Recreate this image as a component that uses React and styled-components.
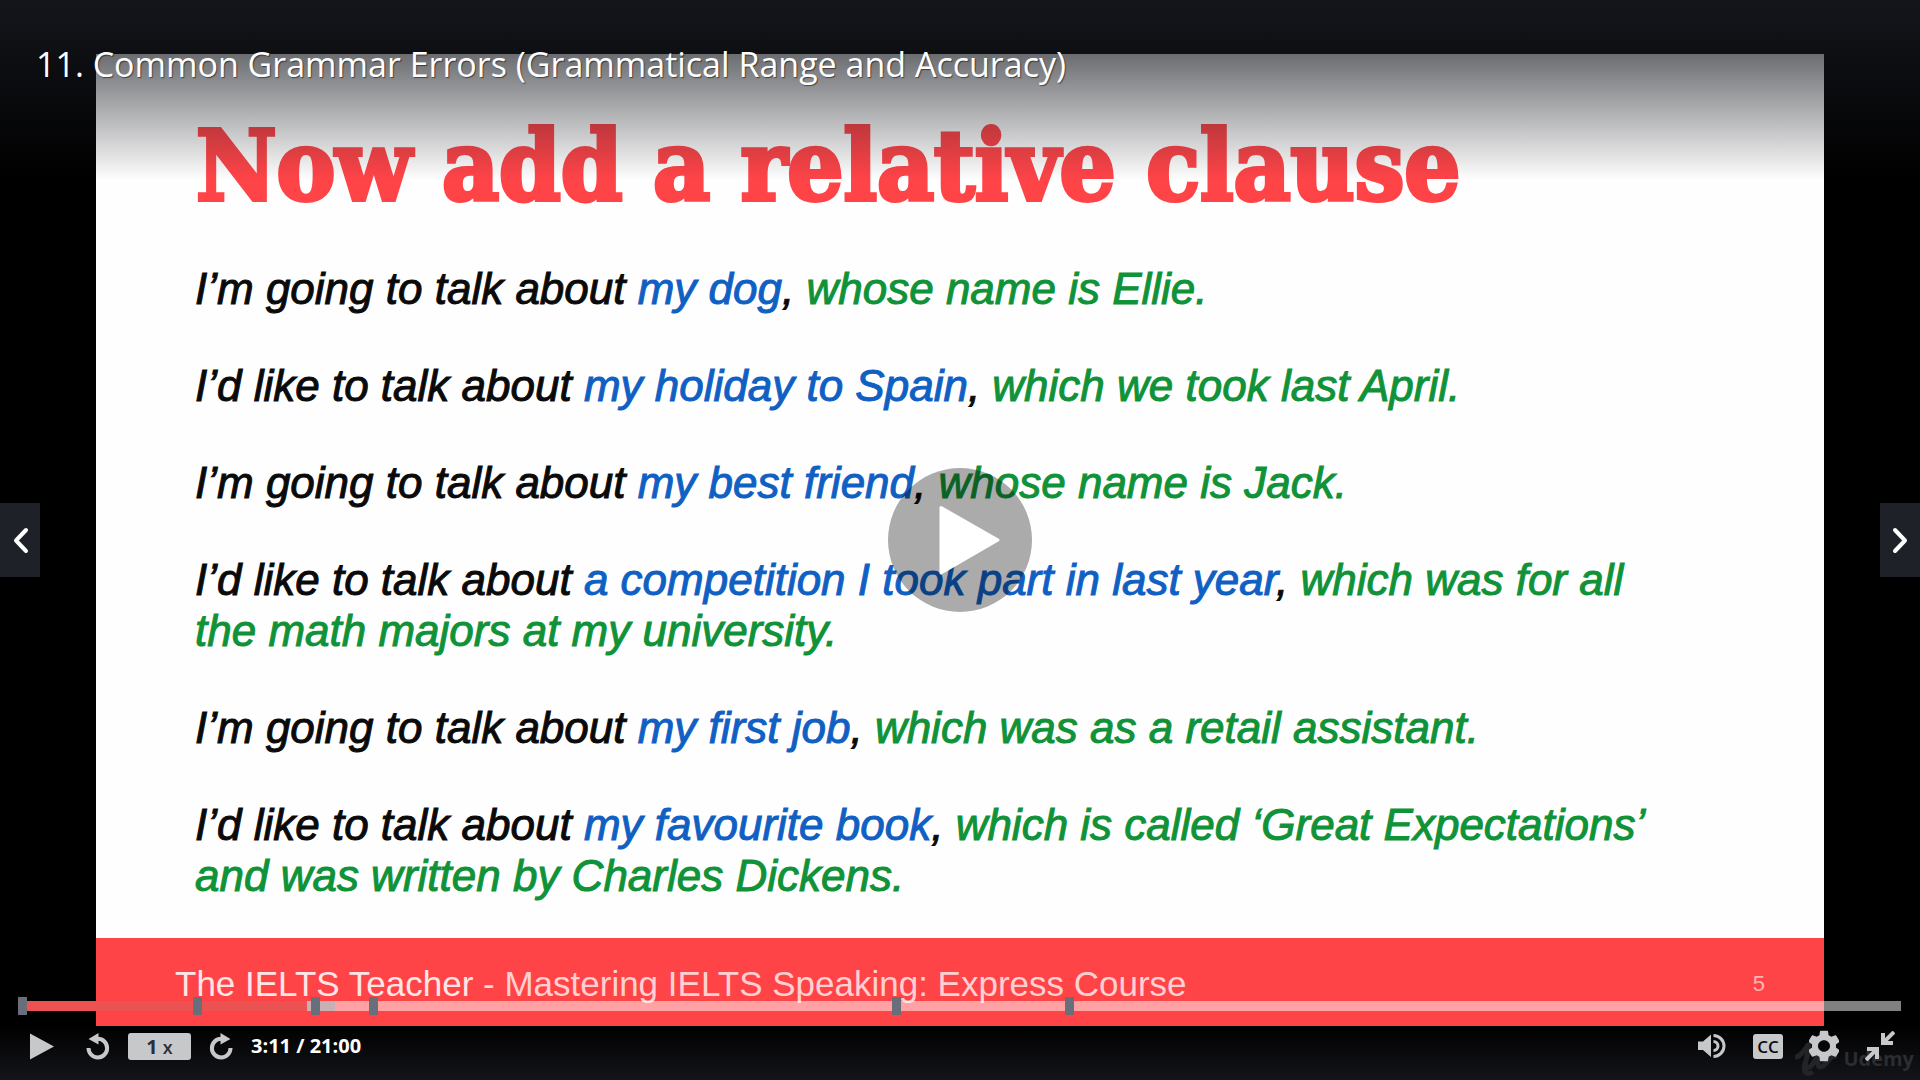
import React, { useState } from "react";
import styled, { createGlobalStyle } from "styled-components";

const GlobalStyle = createGlobalStyle`
  * { box-sizing: border-box; }
  body { margin: 0; background: #000; }
  button { font: inherit; border: 0; padding: 0; cursor: pointer; }
`;

const UI_FONT = '"Open Sans", "Noto Sans", sans-serif';
const SLIDE_FONT = '"Liberation Sans", Arial, sans-serif';

const Player = styled.main`
  position: relative;
  display: flex;
  align-items: center;
  justify-content: center;
  min-height: 100vh;
  overflow: hidden;
  background: #000;
  font-family: ${UI_FONT};
`;

const Slide = styled.article`
  display: flex;
  flex-direction: column;
  width: 90%;
  min-height: 90vh;
  background: #fefefe;
  font-family: ${SLIDE_FONT};
`;

const SlideTitle = styled.h1`
  margin: 0;
  padding: 62px 100px 0;
  color: #ff4448;
  font: bold 98px/100px "DejaVu Serif Condensed", "DejaVu Serif", serif;
  -webkit-text-stroke: 4px #ff4448;
`;

const Examples = styled.div`
  display: flex;
  flex: 1;
  flex-direction: column;
  gap: 46px;
  padding: 47px 150px 0 99px;
  color: #0a0a0a;
  font-size: 44px;
  line-height: 51px;
  font-style: italic;
`;

const Example = styled.p`
  margin: 0;
  -webkit-text-stroke: 1px;
`;

const Part = styled.span`
  color: ${(p) => (p.$kind === "topic" ? "#1060c4" : "#0f9238")};
`;

const SlideFooter = styled.footer`
  display: flex;
  align-items: center;
  justify-content: space-between;
  height: 88px;
  padding: 4px 59px 0 79px;
  background: #ff4448;
  color: #ffd0d1;
  font-size: 35px;
  line-height: 44px;
`;

const Brand = styled.span`
  color: #ffe6e6;
`;

const PageNumber = styled.span`
  color: #ffb4b6;
  font-size: 22px;
`;

const TopBar = styled.header`
  position: absolute;
  inset: 0 0 auto;
  height: 180px;
  padding: 40px 36px;
  background: linear-gradient(rgba(22, 24, 30, 0.9), rgba(22, 24, 30, 0));
`;

const LectureTitle = styled.h2`
  margin: 0;
  color: #fff;
  font-size: 34px;
  font-weight: 400;
  line-height: 48px;
  text-shadow: 1px 1px 1px rgba(0, 0, 0, 0.5);
`;

const BigPlay = styled.button`
  position: absolute;
  inset: 0;
  margin: auto;
  width: 144px;
  height: 144px;
  border-radius: 50%;
  background: rgba(0, 0, 0, 0.325);
`;

const NavButton = styled.button`
  position: absolute;
  top: calc(50% - 37px);
  ${(p) => p.$side}: 0;
  display: grid;
  place-items: center;
  width: 40px;
  height: 74px;
  background: #1e2228;
`;

const BottomBar = styled.div`
  position: absolute;
  inset: auto 0 0;
`;

const Timeline = styled.div`
  position: relative;
  display: flex;
  align-items: center;
  margin: 0 19px 0 22px;
  height: 18px;
`;

const Seek = styled.input`
  appearance: none;
  display: block;
  width: 100%;
  height: 10px;
  margin: 0;
  cursor: pointer;
  background: linear-gradient(
    to right,
    #ec5252 0 ${(p) => p.$played}%,
    rgba(190, 196, 200, 0.84) ${(p) => p.$played}% ${(p) => p.$buffered}%,
    rgba(255, 255, 255, 0.5) ${(p) => p.$buffered}%
  );
  &::-webkit-slider-thumb { appearance: none; width: 1px; height: 10px; }
`;

const Marker = styled.span`
  position: absolute;
  top: 0;
  width: 9px;
  height: 18px;
  margin-left: -4px;
  background: #686f7a;
`;

const Controls = styled.div`
  display: flex;
  align-items: center;
  justify-content: space-between;
  height: 65px;
  padding: 0 24px 3px 16px;
  background: linear-gradient(rgba(20, 21, 26, 0) 11px, #14151a);
  color: #c7c8ca;
`;

const Group = styled.div`
  position: relative;
  display: flex;
  align-items: center;
  gap: ${(p) => p.$gap}px;
`;

const IconButton = styled.button`
  display: grid;
  place-items: center;
  width: ${(p) => p.$width || 32}px;
  height: 32px;
  background: none;
  color: inherit;
`;

const SpeedButton = styled.button`
  display: flex;
  align-items: baseline;
  justify-content: center;
  gap: 5px;
  width: 63px;
  height: 27px;
  border-radius: 3px;
  background: #c7c8ca;
  color: #29303b;
  font-size: 20px;
  font-weight: 700;
  line-height: 28px;
`;

const SpeedUnit = styled.span`
  font-size: 18px;
  font-weight: 600;
`;

const CaptionBadge = styled.span`
  width: 30px;
  height: 25px;
  border-radius: 3px;
  background: #c7c8ca;
  color: #0b0c0f;
  font-size: 17px;
  font-weight: 600;
  line-height: 25px;
  text-align: center;
`;

const Time = styled.span`
  color: #fff;
  font-size: 20px;
  font-weight: 700;
  line-height: 24px;
`;

const Watermark = styled.div`
  position: absolute;
  right: 6px;
  bottom: 4px;
  display: flex;
  align-items: center;
  gap: 6px;
  color: #2b2d31;
  font-size: 20px;
  font-weight: 700;
  line-height: 34px;

  svg { color: #222428; }
`;

const examples = [
  ["I’m going to talk about ", "my dog", "whose name is Ellie."],
  ["I’d like to talk about ", "my holiday to Spain", "which we took last April."],
  ["I’m going to talk about ", "my best friend", "whose name is Jack."],
  ["I’d like to talk about ", "a competition I took part in last year", "which was for all the math majors at my university."],
  ["I’m going to talk about ", "my first job", "which was as a retail assistant."],
  ["I’d like to talk about ", "my favourite book", "which is called ‘Great Expectations’ and was written by Charles Dickens."],
];

const markers = [0, 9.3, 15.6, 18.7, 46.5, 55.7];

const ReplayIcon = ({ flip }) => (
  <svg width="24" height="27" viewBox="0 0 24 27" aria-hidden="true">
    <g transform={flip ? "translate(24 0) scale(-1 1)" : undefined}>
      <path d="M2.5 15a9.3 9.3 0 1 0 9.3-9.2" fill="none" stroke="currentColor" strokeWidth="4" />
      <path d="M12.5 0v11.5L2.5 6z" fill="currentColor" />
    </g>
  </svg>
);

const Chevron = ({ d }) => (
  <svg width="17" height="27" viewBox="0 0 17 27" aria-hidden="true">
    <path d={d} fill="none" stroke="#fff" strokeWidth="4" strokeLinecap="round" strokeLinejoin="round" />
  </svg>
);

export default function App() {
  const [position, setPosition] = useState(191);
  const played = (position / 1260) * 100;

  return (
    <Player>
      <GlobalStyle />
      <Slide>
        <SlideTitle>Now add a relative clause</SlideTitle>
        <Examples>
          {examples.map(([lead, topic, clause]) => (
            <Example key={topic}>
              {lead}
              <Part $kind="topic">{topic}</Part>, <Part $kind="clause">{clause}</Part>
            </Example>
          ))}
        </Examples>
        <SlideFooter>
          <span><Brand>The IELTS Teacher</Brand> - Mastering IELTS Speaking: Express Course</span>
          <PageNumber>5</PageNumber>
        </SlideFooter>
      </Slide>

      <TopBar>
        <LectureTitle>11. Common Grammar Errors (Grammatical Range and Accuracy)</LectureTitle>
      </TopBar>

      <BigPlay aria-label="Play video">
        <svg width="144" height="144" viewBox="0 0 144 144" aria-hidden="true">
          <path d="M53 39.500L110 72L53 105z" fill="#fff" stroke="#fff" strokeWidth="3" strokeLinejoin="round" />
        </svg>
      </BigPlay>

      <NavButton $side="left" aria-label="Previous lecture"><Chevron d="M14 3L4 13.500L14 24" /></NavButton>
      <NavButton $side="right" aria-label="Next lecture"><Chevron d="M3 3L13 13.500L3 24" /></NavButton>

      <BottomBar>
        <Timeline>
          <Seek
            type="range"
            aria-label="Seek"
            min="0"
            max="1260"
            value={position}
            onChange={(e) => setPosition(Number(e.target.value))}
            $played={played}
            $buffered={played + 1.5}
          />
          {markers.map((m) => <Marker key={m} style={{ left: `${m}%` }} />)}
        </Timeline>
        <Controls>
          <Watermark aria-hidden="true">
            <svg width="42" height="34" viewBox="0 0 42 34">
              <path d="M2 15C8 12 12 4 13 3C17 6 8 20 11 25C15 29 22 16 24 10C22 20 22 28 28 24C33 21 35 13 40 14M10 21C8 28 10 33 16 31" fill="none" stroke="currentColor" strokeWidth="5" strokeLinecap="round" strokeLinejoin="round" />
            </svg>
            Udemy
          </Watermark>
          <Group $gap="14">
            <IconButton $width={52} aria-label="Play">
              <svg width="24" height="27" viewBox="0 0 24 27" aria-hidden="true"><path d="M0 0.500L24 13.500L0 26.500z" fill="currentColor" /></svg>
            </IconButton>
            <IconButton aria-label="Rewind"><ReplayIcon /></IconButton>
            <SpeedButton aria-label="Playback rate"><span>1</span><SpeedUnit>x</SpeedUnit></SpeedButton>
            <IconButton aria-label="Forward"><ReplayIcon flip /></IconButton>
            <Time>3:11 / 21:00</Time>
          </Group>
          <Group $gap="24">
            <IconButton aria-label="Mute">
              <svg width="28" height="26" viewBox="0 0 28 26" aria-hidden="true">
                <path d="M0 8.500H5L13 1.500V24L5 17H0z" fill="currentColor" />
                <path d="M15.500 8.500a4.500 4.500 0 0 1 0 9M15.500 2.500a10.300 10.300 0 0 1 0 21" fill="none" stroke="currentColor" strokeWidth="3" />
              </svg>
            </IconButton>
            <IconButton aria-label="Captions"><CaptionBadge>CC</CaptionBadge></IconButton>
            <IconButton aria-label="Settings">
              <svg width="30" height="32" viewBox="3 2 18 20" preserveAspectRatio="none" aria-hidden="true">
                <path fill="currentColor" d="M19.140 12.940c.04-.3.06-.61.06-.94 0-.32-.02-.64-.07-.94l2.030-1.580c.18-.14.23-.41.12-.61l-1.920-3.320c-.12-.22-.37-.29-.59-.22l-2.390.96c-.5-.38-1.030-.7-1.620-.94l-.36-2.540c-.04-.24-.24-.41-.48-.41h-3.840c-.24 0-.43.17-.47.41l-.36 2.540c-.59.24-1.130.57-1.620.94l-2.390-.96c-.22-.08-.47 0-.59.22L2.740 8.870c-.12.21-.08.47.12.61l2.030 1.580c-.05.3-.09.63-.09.94s.02.64.07.94l-2.030 1.580c-.18.14-.23.41-.12.61l1.920 3.320c.12.22.37.29.59.22l2.390-.96c.5.38 1.030.7 1.620.94l.36 2.540c.05.24.24.41.48.41h3.840c.24 0 .44-.17.47-.41l.36-2.540c.59-.24 1.130-.56 1.620-.94l2.390.96c.22.08.47 0 .59-.22l1.920-3.320c.12-.22.07-.47-.12-.61l-2.010-1.580zM12 15.600c-1.980 0-3.600-1.620-3.600-3.600s1.620-3.600 3.600-3.600 3.600 1.620 3.600 3.600-1.620 3.600-3.600 3.600z" />
              </svg>
            </IconButton>
            <IconButton aria-label="Exit fullscreen">
              <svg width="30" height="30" viewBox="0 0 30 30" aria-hidden="true">
                <path d="M29 1L18 12M1 29L12 18" stroke="currentColor" strokeWidth="4" />
                <path d="M16 2h4v8h8v4H16zM14 28h-4v-8H2v-4H14z" fill="currentColor" />
              </svg>
            </IconButton>
          </Group>
        </Controls>
      </BottomBar>
    </Player>
  );
}
